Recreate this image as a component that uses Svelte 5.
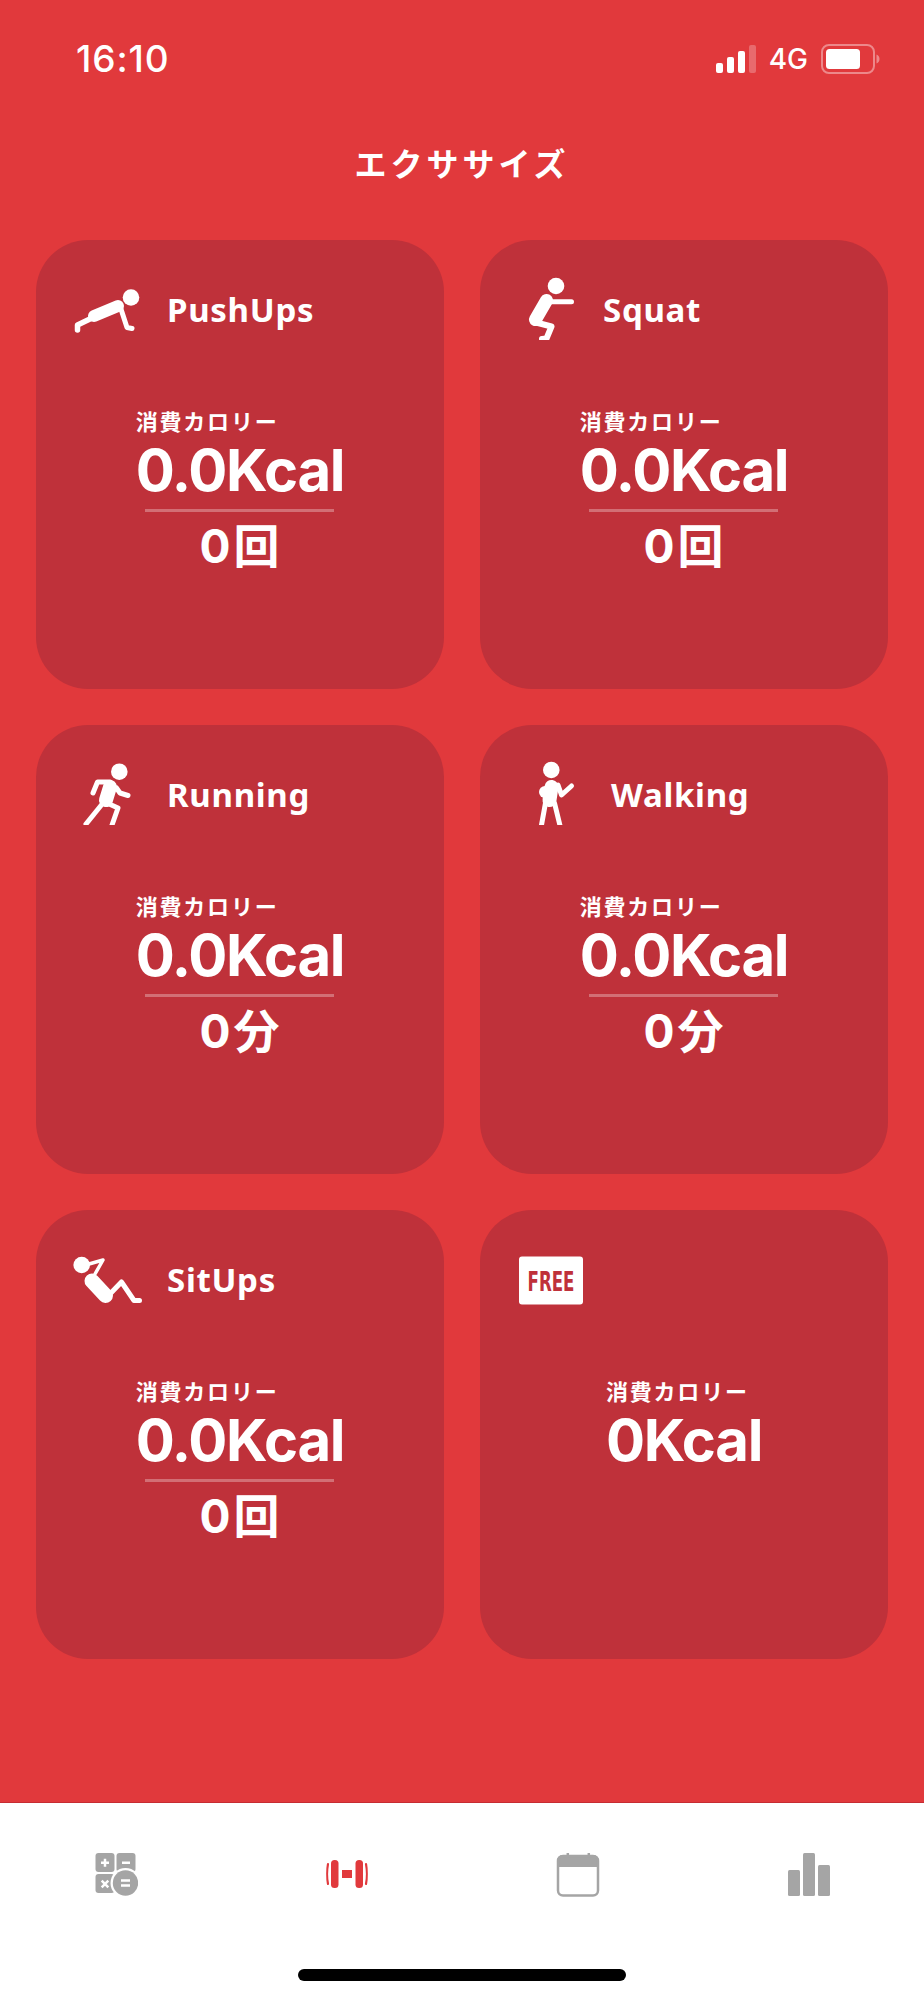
<script>
  const cards = [
    { id: 'push', name: 'PushUps', kcal: '0.0Kcal', count: '0回' },
    { id: 'squat', name: 'Squat', kcal: '0.0Kcal', count: '0回' },
    { id: 'run', name: 'Running', kcal: '0.0Kcal', count: '0分' },
    { id: 'walk', name: 'Walking', kcal: '0.0Kcal', count: '0分' },
    { id: 'sit', name: 'SitUps', kcal: '0.0Kcal', count: '0回' },
    { id: 'free', name: '', kcal: '0Kcal', count: '' }
  ];
</script>

<div class="page">
  <div class="status">
    <span class="time">16:10</span>
    <div class="indicators">
      <svg class="signal" viewBox="0 0 41 28" width="41" height="28">
        <rect x="0" y="18" width="7" height="10" rx="2" fill="#fff" />
        <rect x="11" y="12" width="7" height="16" rx="2" fill="#fff" />
        <rect x="22" y="6" width="7" height="22" rx="2" fill="#fff" />
        <rect x="33" y="0" width="7" height="28" rx="2" fill="#fff" opacity="0.25" />
      </svg>
      <span class="net">4G</span>
      <svg class="battery" viewBox="0 0 59 30" width="59" height="30">
        <rect x="1" y="1" width="52" height="28" rx="7" fill="none" stroke="#fff" stroke-opacity="0.4" stroke-width="2" />
        <rect x="5" y="5" width="34" height="20" rx="3.5" fill="#fff" />
        <path d="M55.5 10.5c2 .6 3 2.4 3 4.5s-1 3.9-3 4.5z" fill="#fff" fill-opacity="0.4" />
      </svg>
    </div>
  </div>

  <h1 class="title">エクササイズ</h1>

  <div class="grid">
    {#each cards as c}
      <section class="card">
        <div class="head">
          <svg class="ic" viewBox="0 0 131 100" width="131" height="100" class:narrow={c.id === 'squat'}>
            {#if c.id === 'push'}
              <circle cx="95" cy="57.5" r="8.3" fill="#fff" />
              <path d="M58 76 82 66" stroke="#fff" stroke-width="12" stroke-linecap="round" fill="none" />
              <path d="M56 78 41.5 85V90" stroke="#fff" stroke-width="5.5" stroke-linecap="round" stroke-linejoin="round" fill="none" />
              <path d="M84 66 91 87.5 96 88.5" stroke="#fff" stroke-width="5" stroke-linecap="round" stroke-linejoin="round" fill="none" />
            {:else if c.id === 'squat'}
              <circle cx="76" cy="46" r="8.3" fill="#fff" />
              <path d="M66.5 60.5 55.5 79.5" stroke="#fff" stroke-width="13" stroke-linecap="round" fill="none" />
              <path d="M70 61.7H91.5" stroke="#fff" stroke-width="5" stroke-linecap="round" fill="none" />
              <path d="M56 82.5 71.5 86.5 66.5 98.5 62 99" stroke="#fff" stroke-width="6" stroke-linecap="round" stroke-linejoin="round" fill="none" />
            {:else if c.id === 'run'}
              <circle cx="83.3" cy="46.7" r="8.3" fill="#fff" />
              <path d="M74 62 70 75" stroke="#fff" stroke-width="14" stroke-linecap="round" fill="none" />
              <path d="M74 57H61.5L57 68" stroke="#fff" stroke-width="5" stroke-linecap="round" stroke-linejoin="round" fill="none" />
              <path d="M80.5 63 84 68 92 70.5" stroke="#fff" stroke-width="5" stroke-linecap="round" stroke-linejoin="round" fill="none" />
              <path d="M67 78 50 99" stroke="#fff" stroke-width="5" stroke-linecap="round" fill="none" />
              <path d="M71 78 82 83 76 100" stroke="#fff" stroke-width="5" stroke-linecap="round" stroke-linejoin="round" fill="none" />
            {:else if c.id === 'walk'}
              <circle cx="71.3" cy="45" r="8.3" fill="#fff" />
              <path d="M71.5 62 69.5 75" stroke="#fff" stroke-width="14" stroke-linecap="round" fill="none" />
              <circle cx="65" cy="67" r="6" fill="#fff" />
              <path d="M78 60 81.5 70 91.5 61" stroke="#fff" stroke-width="5" stroke-linecap="round" stroke-linejoin="round" fill="none" />
              <path d="M65.5 78 61.5 100M74.5 78 80 100.5" stroke="#fff" stroke-width="5" stroke-linecap="round" fill="none" />
            {:else if c.id === 'sit'}
              <circle cx="45.7" cy="55" r="8.3" fill="#fff" />
              <path d="M53 54 67 50 59 64" stroke="#fff" stroke-width="3.5" stroke-linecap="round" stroke-linejoin="round" fill="none" />
              <path d="M56 71 69.5 85.5" stroke="#fff" stroke-width="15" stroke-linecap="round" fill="none" />
              <path d="M72 86 85.5 72 98 90.5H103.5" stroke="#fff" stroke-width="5" stroke-linecap="round" stroke-linejoin="round" fill="none" />
            {:else}
              <rect x="39" y="46.5" width="64" height="48" rx="3" fill="#fff" />
              <text x="71" y="80.5" text-anchor="middle" textLength="47" lengthAdjust="spacingAndGlyphs" class="free">FREE</text>
            {/if}
          </svg>
          {#if c.name}
            <span class="name">{c.name}</span>
          {/if}
        </div>
        <div class="stats">
          <span class="label">消費カロリー</span>
          <span class="kcal">{c.kcal}</span>
          {#if c.count}
            <span class="rule"></span>
            <span class="count">{c.count}</span>
          {/if}
        </div>
      </section>
    {/each}
  </div>

  <nav class="tabs">
    <svg viewBox="0 0 44 44" width="44" height="44">
      <rect x="1.5" y="0" width="19" height="19" rx="3" fill="#a5a5a5" />
      <rect x="22.5" y="0" width="19" height="19" rx="3" fill="#a5a5a5" />
      <rect x="1.5" y="21" width="19" height="19" rx="3" fill="#a5a5a5" />
      <circle cx="31.5" cy="30" r="15" fill="#fff" />
      <circle cx="31.5" cy="30" r="12.7" fill="#a5a5a5" />
      <path d="M7 9.7H15M11 5.7V13.7M28 9.7H36M7.7 27.7 14.3 34.3M14.3 27.7 7.7 34.3M27 27.5H36M27 32.5H36" stroke="#fff" stroke-width="2.5" fill="none" />
    </svg>
    <svg class="active" viewBox="0 0 44 28" width="44" height="28">
      <rect x="6" y="0" width="7.5" height="28" rx="3.5" fill="#e1393c" />
      <rect x="30.5" y="0" width="7.5" height="28" rx="3.5" fill="#e1393c" />
      <rect x="17" y="10" width="10" height="8" fill="#e1393c" />
      <path d="M3 4C2 9 2 19 3 24M41 4C42 9 42 19 41 24" stroke="#e1393c" stroke-width="2.2" fill="none" stroke-linecap="round" />
    </svg>
    <svg viewBox="0 0 44 44" width="44" height="44">
      <path d="M7 2H37A5.5 5.5 0 0 1 43 7V14H1V7A5.5 5.5 0 0 1 7 2Z" fill="#a5a5a5" />
      <path d="M11.8 0V4M32.8 0V4" stroke="#a5a5a5" stroke-width="2.5" />
      <rect x="2" y="3" width="40" height="39.5" rx="5" fill="none" stroke="#a5a5a5" stroke-width="2.5" />
    </svg>
    <svg viewBox="0 0 44 44" width="44" height="44">
      <rect x="1" y="17" width="12" height="26" rx="1.5" fill="#a5a5a5" />
      <rect x="16" y="0" width="12" height="43" rx="1.5" fill="#a5a5a5" />
      <rect x="31" y="12" width="12" height="31" rx="1.5" fill="#a5a5a5" />
    </svg>
    <span class="home"></span>
  </nav>
</div>

<style>
  :global(body) {
    margin: 0;
    background: #e1393c;
  }

  .page {
    width: 924px;
    height: 2000px;
    background: #e1393c;
    color: #fff;
    display: flex;
    flex-direction: column;
    font-family: Inter, "Noto Sans CJK JP", sans-serif;
    overflow: hidden;
  }

  .status {
    height: 118px;
    padding: 40px 44px 0 76px;
    box-sizing: border-box;
    display: flex;
    justify-content: space-between;
    align-items: flex-start;
  }

  .time {
    font-size: 37px;
    line-height: 38px;
    font-weight: 500;
    letter-spacing: 0.9px;
  }

  .indicators {
    display: flex;
    align-items: center;
    height: 38px;
  }

  .net {
    font-size: 28px;
    font-weight: 500;
    margin: 0 13px 0 12px;
  }

  .title {
    margin: 0;
    height: 122px;
    padding-top: 23px;
    box-sizing: border-box;
    text-align: center;
    font: 700 32px/42px "Noto Sans CJK JP", sans-serif;
    letter-spacing: 4px;
  }

  .grid {
    display: grid;
    grid-template-columns: 408px 408px;
    grid-auto-rows: 449px;
    gap: 36px;
    padding: 0 36px;
  }

  .card {
    background: #bf313a;
    border-radius: 52px;
    display: flex;
    flex-direction: column;
    align-items: center;
  }

  .head {
    align-self: stretch;
    height: 168px;
    display: flex;
    align-items: flex-start;
  }

  .ic {
    flex: none;
  }

  .ic.narrow {
    margin-right: -8px;
  }

  .free {
    font: 700 27px "DejaVu Sans", sans-serif;
    fill: #bf313a;
  }

  .name {
    font: 700 33px/40px "Noto Sans", sans-serif;
    letter-spacing: 0.7px;
    margin-top: 50px;
  }

  .stats {
    display: flex;
    flex-direction: column;
    align-items: center;
  }

  .label {
    align-self: flex-start;
    font: 700 22px/24px "Noto Sans CJK JP", sans-serif;
    letter-spacing: 1.8px;
  }

  .kcal {
    font-size: 58px;
    line-height: 56px;
    font-weight: 700;
    letter-spacing: -1.3px;
    margin-top: 10px;
  }

  .rule {
    width: 189px;
    height: 3px;
    margin-top: 11px;
    background: rgba(255, 255, 255, 0.3);
  }

  .count {
    font: 700 46px/52px Inter, "Noto Sans CJK JP", sans-serif;
    letter-spacing: 3px;
    margin: 8px 0 0 2px;
  }

  .tabs {
    position: relative;
    margin-top: auto;
    height: 198px;
    background: #fff;
    border-top: 1px solid #c62c32;
    box-sizing: border-box;
    display: grid;
    grid-template-columns: repeat(4, 1fr);
    justify-items: center;
    align-items: start;
    padding-top: 50px;
  }

  .active {
    margin-top: 7px;
  }

  .home {
    position: absolute;
    left: 298px;
    top: 166px;
    width: 328px;
    height: 12px;
    border-radius: 6px;
    background: #000;
  }
</style>
